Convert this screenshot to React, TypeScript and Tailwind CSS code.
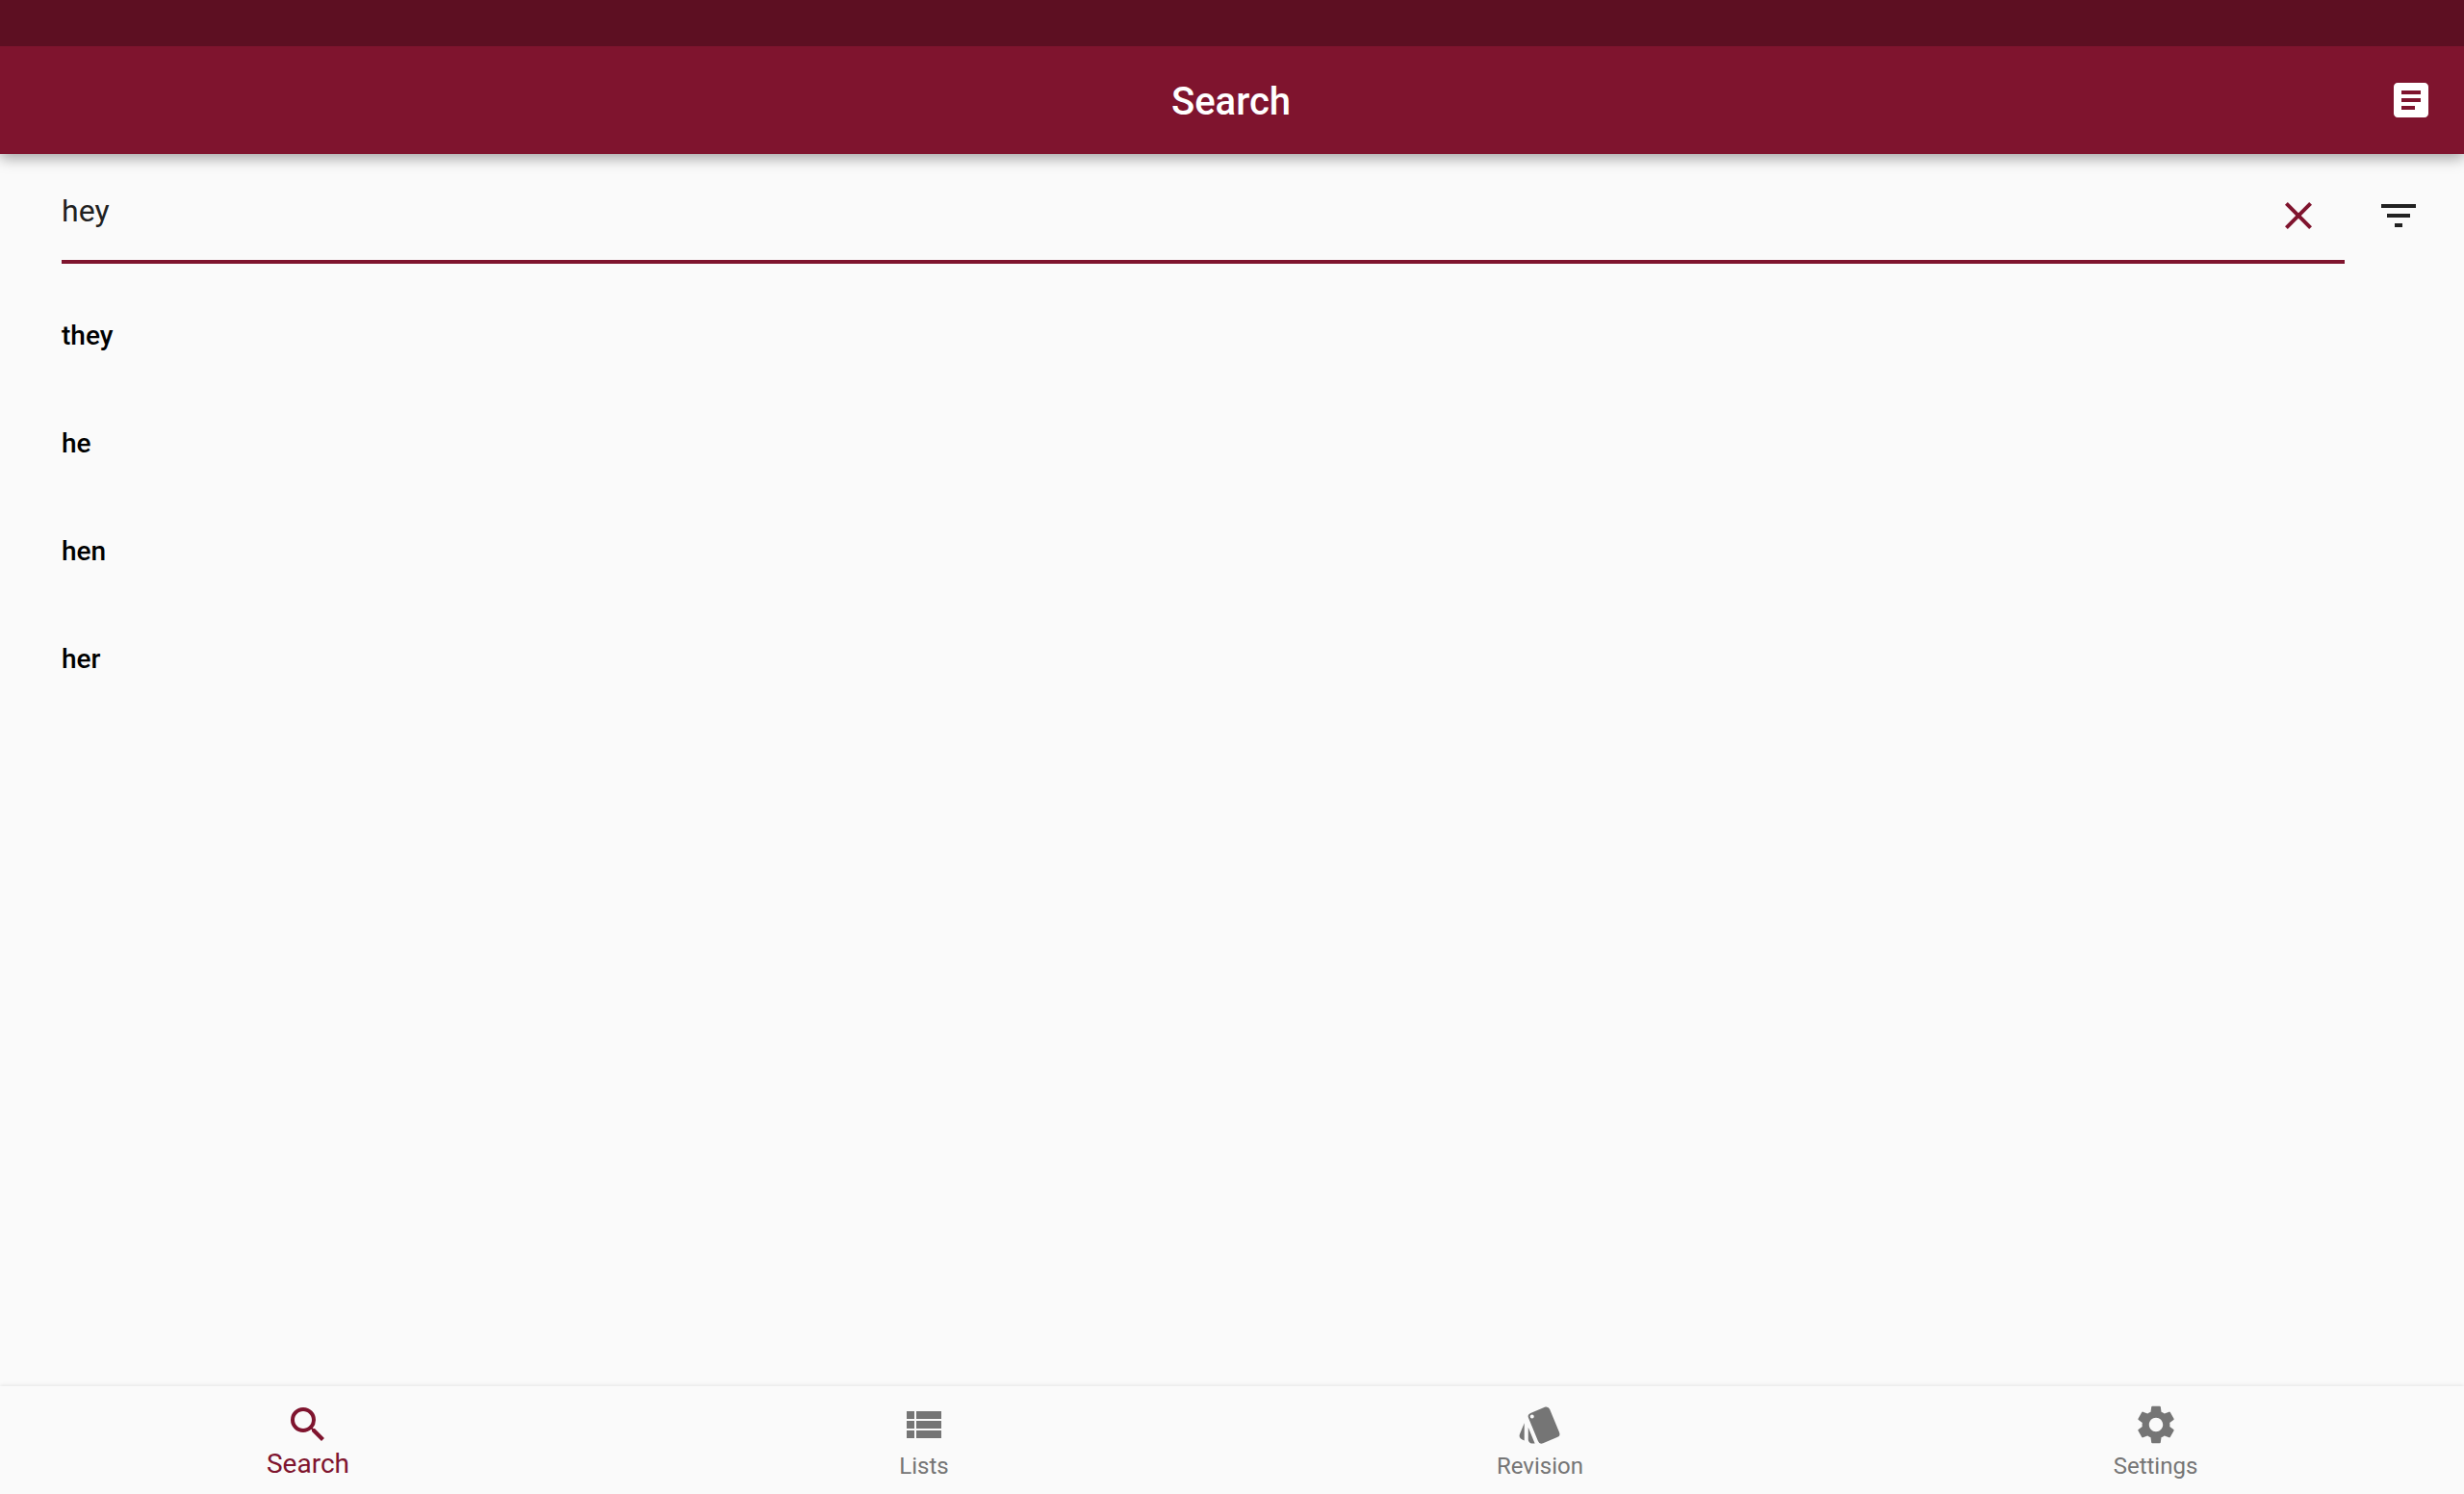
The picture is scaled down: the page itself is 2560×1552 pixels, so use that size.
import React from "react";
import { MdArticle, MdClose, MdFilterList, MdSearch, MdSettings, MdStyle } from "react-icons/md";

const results = ["they", "he", "hen", "her"];

function ViewListIcon({ className }: { className?: string }) {
  return (
    <svg viewBox="0 0 24 24" fill="currentColor" className={className}>
      <path d="M3 14h4v-4H3v4zm0 5h4v-4H3v4zM3 9h4V5H3v4zm5 5h13v-4H8v4zm0 5h13v-4H8v4zM8 5v4h13V5H8z" />
    </svg>
  );
}

const tabs = [
  { label: "Lists", Icon: ViewListIcon, labelClass: "" },
  { label: "Revision", Icon: MdStyle, labelClass: "" },
  { label: "Settings", Icon: MdSettings, labelClass: "pr-px" },
];

function Header() {
  return (
    <header className="relative shrink-0 bg-[#7f142e] text-white shadow-[0_4px_14px_rgba(0,0,0,0.37)]">
      <div className="h-12 bg-[#5d0f22]" />
      <div className="grid h-28 grid-cols-[1fr_auto_1fr] items-start px-[31px]">
        <span />
        <h1 className="pt-[34px] pr-0.5 text-[40px] leading-[47px] font-medium">Search</h1>
        <button className="mt-8 justify-self-end" aria-label="Article">
          <MdArticle className="size-12" />
        </button>
      </div>
    </header>
  );
}

function SearchField() {
  return (
    <div className="flex h-[114px] shrink-0 pr-11 pl-16">
      <div className="flex flex-1 justify-between border-b-4 border-[#7f142e] pr-6">
        <span className="pt-10 text-[32px] leading-[38px] text-[#212121]">hey</span>
        <button className="mt-10 self-start text-[#7f142e]" aria-label="Clear">
          <MdClose className="size-12" />
        </button>
      </div>
      <button className="mt-10 ml-8 self-start text-[#212121]" aria-label="Filter">
        <MdFilterList className="size-12" />
      </button>
    </div>
  );
}

export default function App() {
  return (
    <div className="flex h-[1552px] w-[2560px] flex-col overflow-hidden bg-[#fafafa] font-['Roboto',sans-serif]">
      <Header />
      <main className="flex flex-1 flex-col">
        <SearchField />
        <ul className="mt-[18px]">
          {results.map((word) => (
            <li key={word} className="h-28 pt-10 pl-16 text-[28px] leading-[33px] font-medium text-black">
              {word}
            </li>
          ))}
        </ul>
      </main>
      <nav className="relative grid h-28 shrink-0 grid-cols-4 bg-[#fafafa] shadow-[0_-1px_4px_rgba(0,0,0,0.09)]">
        <button className="flex flex-col items-center pt-4 text-[#7f142e]">
          <MdSearch className="size-12" />
          <span className="text-[28px] leading-[33px]">Search</span>
        </button>
        {tabs.map(({ label, Icon, labelClass }) => (
          <button key={label} className="flex flex-col items-center pt-4 text-[#757575]">
            <Icon className="size-12" />
            <span className={`mt-[5px] text-[24px] leading-7 ${labelClass}`}>{label}</span>
          </button>
        ))}
      </nav>
    </div>
  );
}
